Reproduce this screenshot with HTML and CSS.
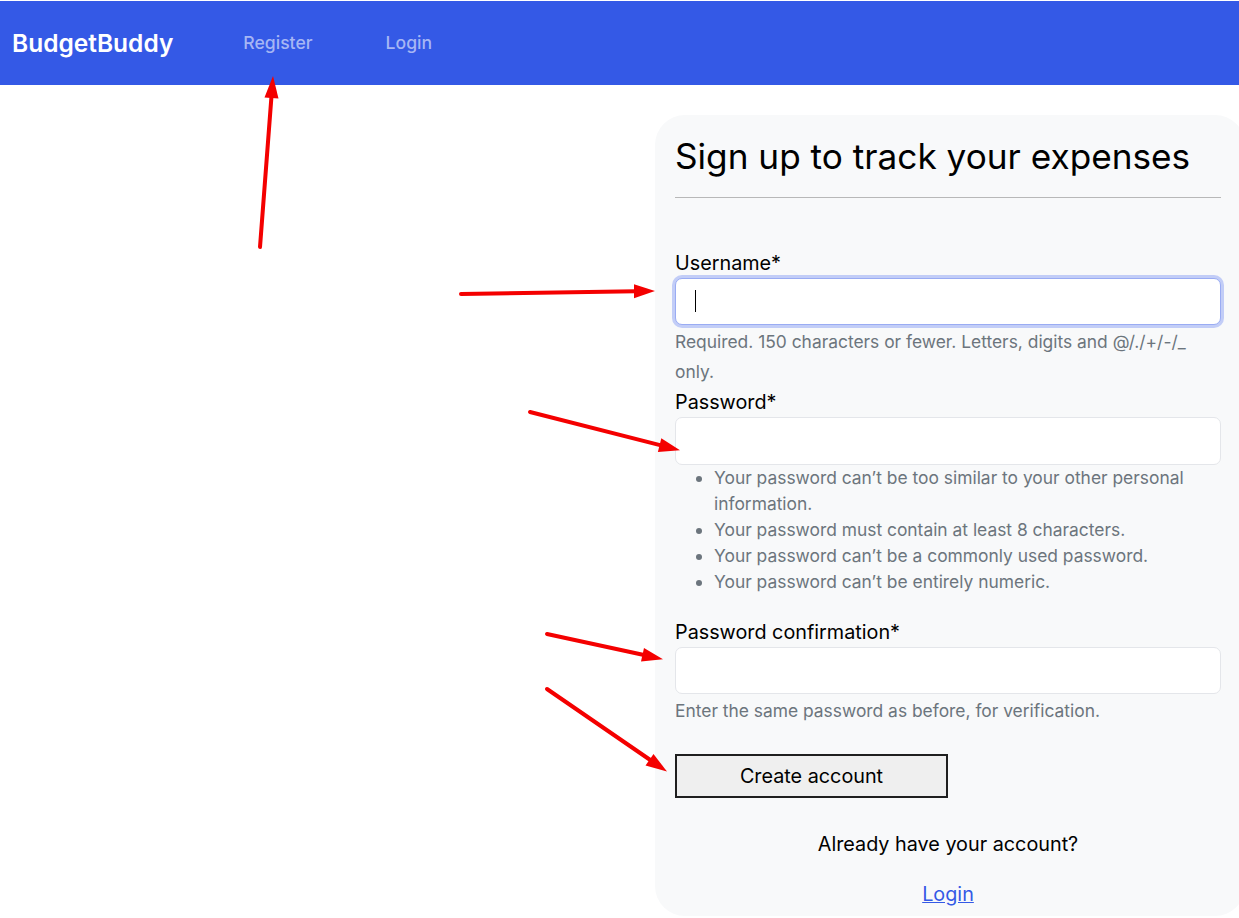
FILE: index.html
```html
<!DOCTYPE html>
<html lang="en">
<head>
<meta charset="utf-8">
<title>BudgetBuddy - Register</title>
<link rel="stylesheet" href="styles.css">
</head>
<body>
<nav class="navbar">
  <a class="brand" href="#">BudgetBuddy</a>
  <a class="nav-link" href="#">Register</a>
  <a class="nav-link" href="#">Login</a>
</nav>
<main class="page">
  <div class="spacer"></div>
  <section class="card">
    <h1 class="title">Sign up to track your expenses</h1>
    <hr class="rule">
    <form class="form">
      <div class="field first">
        <label class="label" for="u">Username*</label>
        <div class="input-wrap">
          <input class="input focused" id="u" type="text">
          <span class="caret"></span>
        </div>
        <div class="help">Required. 150 characters or fewer. Letters, digits and @/./+/-/_ only.</div>
      </div>
      <div class="field password">
        <label class="label" for="p1">Password*</label>
        <input class="input tall" id="p1" type="password">
        <ul class="help-list">
          <li>Your password can’t be too similar to your other personal information.</li>
          <li>Your password must contain at least 8 characters.</li>
          <li>Your password can’t be a commonly used password.</li>
          <li>Your password can’t be entirely numeric.</li>
        </ul>
      </div>
      <div class="field confirm">
        <label class="label" for="p2">Password confirmation*</label>
        <input class="input" id="p2" type="password">
        <div class="help">Enter the same password as before, for verification.</div>
      </div>
      <button class="btn" type="button">Create account</button>
    </form>
    <p class="already">Already have your account?</p>
    <p class="login-line"><a class="login-link" href="#">Login</a></p>
  </section>
</main>
<svg class="arrows" width="1239" height="918" viewBox="0 0 1239 918">
  <g stroke="#f40000" stroke-width="4" stroke-linecap="round" fill="none">
    <line x1="260" y1="247" x2="271.5" y2="96"/>
    <line x1="461" y1="294" x2="636" y2="291.3"/>
    <line x1="530" y1="412" x2="661" y2="445.4"/>
    <line x1="547" y1="634" x2="644" y2="655"/>
    <line x1="547" y1="689" x2="651" y2="760.5"/>
  </g>
  <g fill="#f40000">
    <polygon points="273,76 278.5,98.5 264.5,97.4"/>
    <polygon points="655,291 634,298.3 634,284.3"/>
    <polygon points="680,450.3 657.9,451.9 661.3,438.3"/>
    <polygon points="663,659.2 641,661.6 644,647.9"/>
    <polygon points="667,771.6 645.5,765.5 653.5,754"/>
  </g>
</svg>
</body>
</html>
```

FILE: styles.css
```css
* { box-sizing: border-box; }

html, body {
  margin: 0;
  padding: 0;
  background: #ffffff;
}

body {
  position: relative;
  padding-top: 1px;
  font-family: Inter, "Noto Sans", "Liberation Sans", sans-serif;
  color: #000;
  width: 1239px;
  height: 918px;
  overflow: hidden;
}

.navbar {
  height: 84px;
  background: #3459e6;
  display: flex;
  align-items: center;
  padding-left: 12px;
  padding-bottom: 1px;
}

.brand {
  color: #ffffff;
  font-size: 24.5px;
  font-weight: 600;
  text-decoration: none;
  margin-right: 70px;
}

.nav-link {
  color: #a6b6f4;
  font-size: 17.6px;
  font-weight: 500;
  text-decoration: none;
  margin-right: 73px;
}

.page {
  display: flex;
  padding-top: 30px;
}

.spacer {
  width: 655px;
  flex: none;
}

.card {
  width: 590px;
  flex: none;
  background: #f8f9fa;
  border-radius: 30px;
  padding: 20px 24px 0 20px;
  height: 801px;
}

.title {
  margin: 0;
  font-size: 35.2px;
  font-weight: 400;
  line-height: 1.2;
  color: #000;
}

.rule {
  margin: 20px 0 0 0;
  border: 0;
  border-top: 1px solid #b8b8b8;
}

.form {
  margin-top: 52px;
}

.field {
  display: flex;
  flex-direction: column;
}

.field.password {
  margin-top: 2px;
}

.label {
  font-size: 19.8px;
  line-height: 26px;
  margin-bottom: 2px;
}

.input-wrap {
  position: relative;
}

.input {
  display: block;
  width: 100%;
  height: 47px;
  border: 1px solid #e4e6ea;
  border-radius: 7px;
  background: #ffffff;
  font-family: inherit;
  font-size: 18px;
  padding: 0 20px;
  outline: none;
}

.input.tall {
  height: 48px;
}

.input.focused {
  border-color: #9aacf3;
  box-shadow: 0 0 0 3px #c2cdf7;
}

.caret {
  position: absolute;
  left: 20px;
  top: 12px;
  width: 1px;
  height: 22px;
  background: #000;
}

.help {
  color: #6c757d;
  font-size: 17.4px;
  line-height: 30px;
  margin-top: 2px;
  padding-right: 24px;
}

.help-list {
  color: #6c757d;
  font-size: 17.4px;
  line-height: 26px;
  margin: 0;
  padding: 0 24px 0 39px;
}

.field.confirm {
  margin-top: 24px;
}

.btn {
  margin-top: 28px;
  width: 273px;
  height: 44px;
  background: #efefef;
  border: 2px solid #1f1f1f;
  border-radius: 0;
  font-family: inherit;
  font-size: 19.8px;
  color: #000;
  padding: 0;
}

.already {
  text-align: center;
  margin: 33px 0 0 0;
  font-size: 19.8px;
  line-height: 26px;
}

.login-line {
  text-align: center;
  margin: 24px 0 0 0;
  font-size: 19.8px;
  line-height: 26px;
}

.login-link {
  color: #3459e6;
  text-decoration: underline;
}

.arrows {
  position: absolute;
  left: 0;
  top: 0;
  pointer-events: none;
}
```
